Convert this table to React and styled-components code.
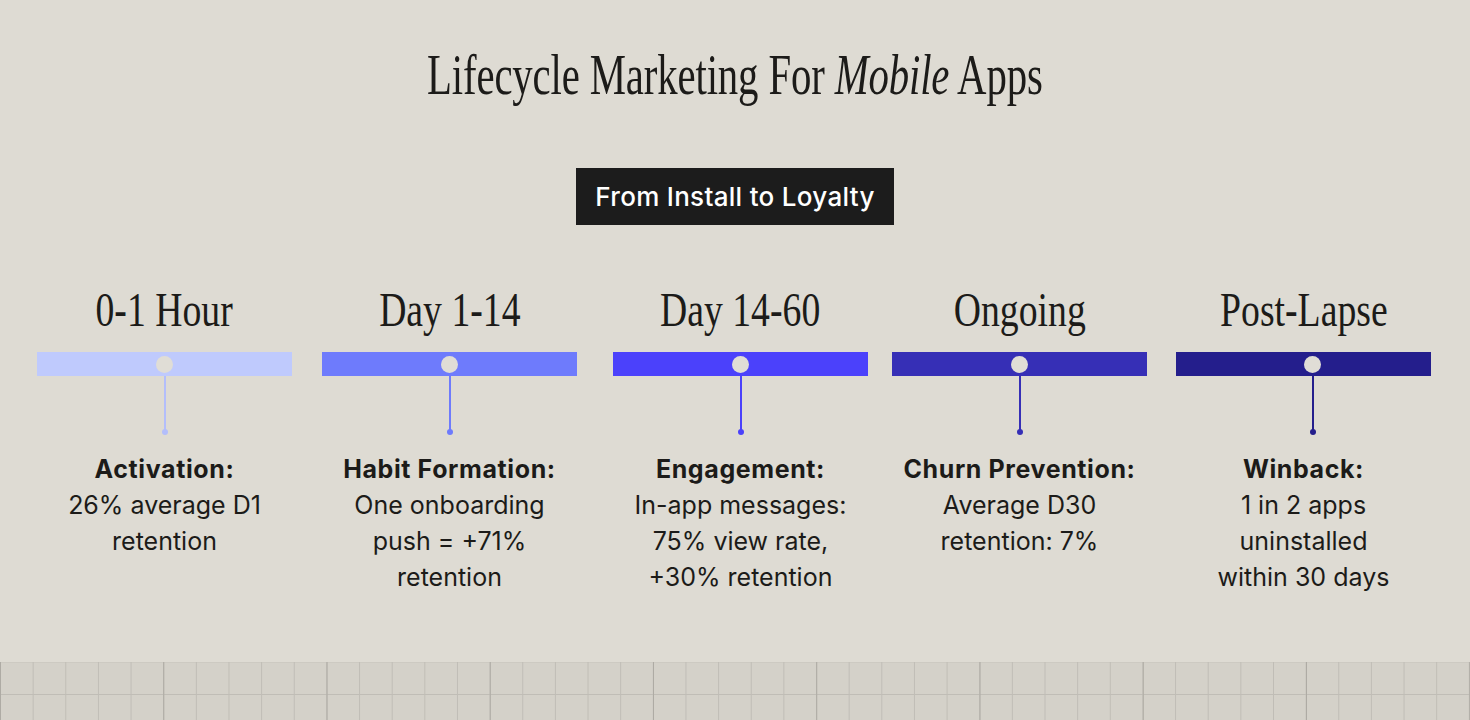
import React from 'react'
import styled, { createGlobalStyle } from 'styled-components'

const GlobalStyle = createGlobalStyle`
  * {
    box-sizing: border-box;
  }

  body {
    margin: 0;
    background-color: #dedbd3;
    color: #1c1b19;
    font-family: Inter, 'Liberation Sans', sans-serif;
  }
`

// gap = space before the column, shift = knob/stem offset from the centre
const stages = [
  {
    period: '0-1 Hour',
    color: '#bfcafd',
    stem: '#b3befb',
    title: 'Activation:',
    lines: ['26% average D1', 'retention'],
    gap: 0,
  },
  {
    period: 'Day 1-14',
    color: '#6e7bfc',
    stem: '#6e7bfc',
    title: 'Habit Formation:',
    lines: ['One onboarding', 'push = +71%', 'retention'],
    gap: 30,
  },
  {
    period: 'Day 14-60',
    color: '#4b41fb',
    stem: '#4b41fb',
    title: 'Engagement:',
    lines: ['In-app messages:', '75% view rate,', '+30% retention'],
    gap: 36,
  },
  {
    period: 'Ongoing',
    color: '#362fb6',
    stem: '#362fb6',
    title: 'Churn Prevention:',
    lines: ['Average D30', 'retention: 7%'],
    gap: 24,
  },
  {
    period: 'Post-Lapse',
    color: '#241e8c',
    stem: '#241e8c',
    title: 'Winback:',
    lines: ['1 in 2 apps', 'uninstalled', 'within 30 days'],
    gap: 29,
    shift: 9,
  },
]

const Page = styled.div`
  width: 1470px;
  height: 720px;
  display: flex;
  flex-direction: column;
  align-items: center;
  overflow: hidden;
`

const Title = styled.h1`
  margin: 46px 0 0;
  height: 58px;
  font-family: 'Liberation Serif', serif;
  font-size: 58px;
  font-weight: 400;
  line-height: 58px;
  letter-spacing: -0.2px;
  white-space: nowrap;
  transform: scaleX(0.703);

  em {
    font-style: italic;
  }
`

const Badge = styled.div`
  margin-top: 64px;
  height: 57px;
  padding: 0 19px;
  display: inline-flex;
  align-items: center;
  background-color: #1c1c1c;
  color: #ffffff;
  font-size: 26px;
  font-weight: 500;
  letter-spacing: 0.3px;
`

const Timeline = styled.div`
  width: 100%;
  margin-top: 60px;
  padding-left: 37px;
  display: flex;
`

const Stage = styled.div`
  width: 255px;
  margin-left: ${({ $gap }) => $gap}px;
  display: flex;
  flex-direction: column;
  align-items: center;
`

const Period = styled.div`
  height: 49px;
  font-family: 'Liberation Serif', serif;
  font-size: 49px;
  line-height: 49px;
  white-space: nowrap;
  transform: scaleX(0.77);
`

const Bar = styled.div`
  position: relative;
  width: 100%;
  height: 24px;
  margin-top: 18px;
  background-color: ${({ $color }) => $color};
`

const Knob = styled.span`
  position: absolute;
  top: 4px;
  left: calc(50% + ${({ $shift }) => $shift || 0}px);
  width: 17px;
  height: 17px;
  margin-left: -8.5px;
  border-radius: 50%;
  background-color: #e0ddd6;
`

const Stem = styled.div`
  position: relative;
  width: 2px;
  height: 56px;
  margin-left: ${({ $shift }) => ($shift || 0) * 2}px;
  background-color: ${({ $color }) => $color};

  &::after {
    content: '';
    position: absolute;
    left: -2px;
    bottom: -3px;
    width: 6px;
    height: 6px;
    border-radius: 50%;
    background-color: ${({ $color }) => $color};
  }
`

const Copy = styled.div`
  margin-top: 19px;
  font-size: 25px;
  line-height: 36px;
  text-align: center;
  white-space: nowrap;
`

const CopyTitle = styled.div`
  font-weight: 700;
  letter-spacing: 0.6px;
`

const Grid = styled.div`
  width: 100%;
  margin-top: auto;
  height: 58px;
  flex-shrink: 0;
  background-color: #d4d1c9;
  background-image:
    linear-gradient(to right, #aeaba4 1.3px, transparent 1.3px),
    linear-gradient(to right, #c0bdb6 1px, transparent 1px),
    linear-gradient(to bottom, #c0bdb6 1px, transparent 1px);
  background-size: 163.25px 100%, 32.65px 100%, 100% 32.65px;
  background-position: 0 0, 0 0, 0 32px;
  background-repeat: repeat-x, repeat-x, repeat-y;
`

export default function App() {
  return (
    <>
      <GlobalStyle />
      <Page>
        <Title>
          Lifecycle Marketing For <em>Mobile</em> Apps
        </Title>
        <Badge>From Install to Loyalty</Badge>
        <Timeline>
          {stages.map(stage => (
            <Stage key={stage.period} $gap={stage.gap}>
              <Period>{stage.period}</Period>
              <Bar $color={stage.color}>
                <Knob $shift={stage.shift} />
              </Bar>
              <Stem $color={stage.stem} $shift={stage.shift} />
              <Copy>
                <CopyTitle>{stage.title}</CopyTitle>
                {stage.lines.map(line => (
                  <div key={line}>{line}</div>
                ))}
              </Copy>
            </Stage>
          ))}
        </Timeline>
        <Grid />
      </Page>
    </>
  )
}
